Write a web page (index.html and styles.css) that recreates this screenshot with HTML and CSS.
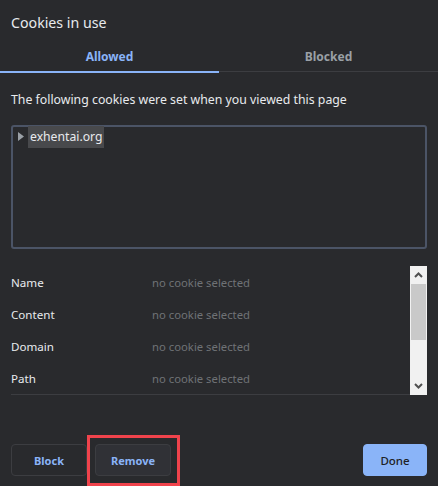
FILE: index.html
```html
<!DOCTYPE html>
<html>
<head>
<meta charset="utf-8">
<link rel="stylesheet" href="styles.css">
</head>
<body>
<div class="dialog">
  <div class="title">Cookies in use</div>
  <div class="tabs">
    <div class="tab active">Allowed</div>
    <div class="tab">Blocked</div>
  </div>
  <div class="desc">The following cookies were set when you viewed this page</div>
  <div class="tree">
    <div class="node">
      <svg class="twisty" width="6" height="9" viewBox="0 0 6 9"><path d="M0 0 L6 4.5 L0 9 Z" fill="#9aa0a6"/></svg>
      <span class="node-label">exhentai.org</span>
    </div>
  </div>
  <div class="details">
    <div class="rows">
      <div class="row"><span class="key">Name</span><span class="val">no cookie selected</span></div>
      <div class="row"><span class="key">Content</span><span class="val">no cookie selected</span></div>
      <div class="row"><span class="key">Domain</span><span class="val">no cookie selected</span></div>
      <div class="row"><span class="key">Path</span><span class="val">no cookie selected</span></div>
    </div>
    <div class="scrollbar">
      <svg class="arrow" width="9" height="6" viewBox="0 0 9 6"><path d="M1 5 L4.5 1.5 L8 5" stroke="#505050" stroke-width="2" fill="none"/></svg>
      <div class="thumb"></div>
      <div class="track"></div>
      <svg class="arrow" width="9" height="6" viewBox="0 0 9 6"><path d="M1 1 L4.5 4.5 L8 1" stroke="#505050" stroke-width="2" fill="none"/></svg>
    </div>
  </div>
  <div class="buttons">
    <button class="btn">Block</button>
    <span class="marked"><button class="btn focused">Remove</button></span>
    <span class="spacer"></span>
    <button class="btn primary">Done</button>
  </div>
</div>
</body>
</html>
```
FILE: styles.css
```css
html, body {
  margin: 0;
  padding: 0;
  background: #292a2d;
}
body {
  width: 438px;
  height: 486px;
  overflow: hidden;
  font-family: "Noto Sans", "Open Sans", sans-serif;
  color: #e8eaed;
}
.dialog {
  display: flex;
  flex-direction: column;
}
.title {
  font-size: 14.2px;
  line-height: 20px;
  padding: 13px 11px 0;
  height: 30px;
  box-sizing: border-box;
}
.tabs {
  display: flex;
  margin-top: 12px;
}
.tab {
  flex: 1;
  text-align: center;
  font-size: 12px;
  font-weight: 700;
  color: #9aa0a6;
  height: 30px;
  line-height: 29px;
  border-bottom: 1px solid #3c3d41;
  box-sizing: border-box;
  padding-bottom: 2px;
}
.tab.active {
  color: #8ab4f8;
  border-bottom: 2px solid #8ab4f8;
  height: 31px;
}
.desc {
  font-size: 12.3px;
  line-height: 18px;
  padding: 18px 11px 0;
}
.tree {
  margin: 16px 11px 0;
  height: 124px;
  border: 2px solid #4b5466;
  border-radius: 3px;
  box-sizing: border-box;
  padding: 0 0 0 5px;
}
.node {
  display: flex;
  align-items: center;
  gap: 4px;
}
.twisty {
  margin-top: -3px;
}
.node-label {
  background: #48494c;
  font-size: 12.2px;
  line-height: 22px;
  height: 22px;
  padding: 0 2px;
  margin-top: -1px;
}
.details {
  display: flex;
  margin: 17px 11px 0;
  height: 129px;
}
.rows {
  flex: 1;
  border-bottom: 1px solid #3c3d41;
}
.row {
  display: flex;
  height: 32px;
  align-items: center;
  font-size: 11.6px;
}
.key {
  width: 141px;
  color: #e8eaed;
}
.val {
  color: #6f7276;
  font-size: 11.3px;
}
.scrollbar {
  width: 17px;
  background: #f1f1f1;
  display: flex;
  flex-direction: column;
  align-items: center;
}
.arrow {
  margin: 6px 0;
  flex: none;
}
.thumb {
  width: 15px;
  height: 56px;
  background: #c9c9c9;
  flex: none;
}
.track {
  flex: 1;
}
.buttons {
  display: flex;
  align-items: center;
  gap: 8px;
  margin: 49px 11px 0;
}
.btn {
  height: 32px;
  width: 76px;
  border: 1px solid #3c3d41;
  border-radius: 4px;
  background: transparent;
  color: #8ab4f8;
  font-family: "Noto Sans", "Open Sans", sans-serif;
  font-size: 11px;
  font-weight: 700;
  padding: 0;
}
.btn.focused {
  background: #303136;
}
.btn.primary {
  width: 64px;
  background: #8ab4f8;
  border-color: #8ab4f8;
  color: #202124;
  font-weight: 500;
  font-size: 11.5px;
}
.spacer {
  flex: 1;
}
.marked {
  position: relative;
  display: flex;
}
.marked::after {
  content: "";
  position: absolute;
  left: -8px;
  top: -9px;
  right: -9px;
  bottom: -10px;
  border: 3px solid #f0434c;
}
```
